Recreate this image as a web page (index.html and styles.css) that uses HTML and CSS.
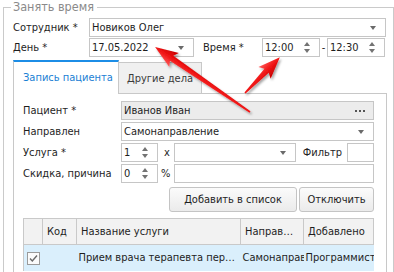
FILE: index.html
```html
<!DOCTYPE html>
<html lang="ru">

<head>
    <meta charset="UTF-8">
    <title>Занять время</title>
    <link rel="stylesheet" href="styles.css">
</head>

<body>

    <fieldset class="group">
        <legend class="group-title">Занять время</legend>

        <div class="row">
            <label class="lbl">Сотрудник *</label>
            <div class="field employee">
                <span class="val">Новиков Олег</span>
                <span class="drop"></span>
            </div>
        </div>

        <div class="row">
            <label class="lbl">День *</label>
            <div class="field date">
                <span class="val">17.05.2022</span>
                <span class="drop"></span>
            </div>
            <label class="lbl time-lbl">Время *</label>
            <div class="field time">
                <span class="val">12:00</span>
                <span class="spinner"><i class="up"></i><i class="down"></i></span>
            </div>
            <span class="dash">-</span>
            <div class="field time">
                <span class="val">12:30</span>
                <span class="spinner"><i class="up"></i><i class="down"></i></span>
            </div>
        </div>

        <div class="tabs">
            <div class="tab active">Запись пациента</div>
            <div class="tab">Другие дела</div>
        </div>

        <div class="panel">
            <div class="prow">
                <span class="plbl">Пациент *</span>
                <div class="field readonly grow">
                    <span class="val">Иванов Иван</span>
                    <span class="dots"><i></i><i></i><i></i></span>
                </div>
            </div>
            <div class="prow">
                <span class="plbl">Направлен</span>
                <div class="field grow">
                    <span class="val">Самонаправление</span>
                    <span class="drop"></span>
                </div>
            </div>
            <div class="prow">
                <span class="plbl">Услуга *</span>
                <div class="field num">
                    <span class="val">1</span>
                    <span class="spinner"><i class="up"></i><i class="down"></i></span>
                </div>
                <span class="sign">x</span>
                <div class="field grow">
                    <span class="drop"></span>
                </div>
                <span class="filter-lbl">Фильтр</span>
                <div class="field filter"></div>
            </div>
            <div class="prow">
                <span class="plbl">Скидка, причина</span>
                <div class="field num">
                    <span class="val">0</span>
                    <span class="spinner"><i class="up"></i><i class="down"></i></span>
                </div>
                <span class="sign pct">%</span>
                <div class="field grow"></div>
            </div>

            <div class="buttons">
                <button class="btn add">Добавить в список</button>
                <button class="btn off">Отключить</button>
            </div>

            <table class="grid">
                <colgroup>
                    <col class="c-chk">
                    <col class="c-code">
                    <col class="c-name">
                    <col class="c-dir">
                    <col class="c-add">
                </colgroup>
                <thead>
                    <tr>
                        <th></th>
                        <th>Код</th>
                        <th>Название услуги</th>
                        <th>Направление</th>
                        <th>Добавлено</th>
                    </tr>
                </thead>
                <tbody>
                    <tr class="selected">
                        <td class="chk-cell">
                            <svg class="chk" width="13" height="13" viewBox="0 0 13 13">
                                <rect x="0.5" y="0.5" width="12" height="12" fill="#fbfbfb" stroke="#9a9a9a"/>
                                <path d="M3 6.5 L5.3 9 L10 3.5" fill="none" stroke="#6a6a6a" stroke-width="1.4"/>
                            </svg>
                        </td>
                        <td></td>
                        <td class="ell">Прием врача терапевта первичный</td>
                        <td class="clip">Самонаправление</td>
                        <td class="clip">Программист</td>
                    </tr>
                </tbody>
            </table>
        </div>
    </fieldset>

    <!-- red pointers drawn over the form -->
    <svg class="arrows" width="394" height="272" viewBox="0 0 394 272">
        <defs>
            <linearGradient id="red" x1="0" y1="0" x2="0" y2="1">
                <stop offset="0" stop-color="#ff5a5a"/>
                <stop offset="0.5" stop-color="#f01414"/>
                <stop offset="1" stop-color="#c40000"/>
            </linearGradient>
            <filter id="shadow" x="-20%" y="-20%" width="140%" height="140%">
                <feDropShadow dx="1.5" dy="2" stdDeviation="1.3" flood-color="#000" flood-opacity="0.35"/>
            </filter>
        </defs>
        <g filter="url(#shadow)">
            <polygon transform="translate(250 112) rotate(-145.6)" fill="url(#red)"
                points="0,-0.8 95,-3 92,-8.5 115,0 92,8.5 95,3 0,0.8"/>
            <polygon transform="translate(245 93) rotate(-45.8)" fill="url(#red)"
                points="0,-0.8 31,-3 28,-8.5 50,0 28,8.5 31,3 0,0.8"/>
        </g>
    </svg>

</body>

</html>
```

FILE: styles.css
```css
* {
    box-sizing: border-box;
}

body {
    margin: 0;
    background-color: #fff;
    font-family: "DejaVu Sans Condensed", "DejaVu Sans", sans-serif;
    font-size: 11px;
    color: #1e1e1e;
    overflow: hidden;
}

.group {
    margin: 0 0 0 3px;
    width: 390px;
    min-height: 300px;
    border: 1px solid #cacaca;
    padding: 4px 6px 0 9px;
}

.group-title {
    margin-left: -2px;
    padding: 0 3px 0 2px;
    font-size: 12.5px;
    line-height: 14px;
    color: #8a8a8a;
}

.row {
    display: flex;
    align-items: center;
    height: 19px;
}

.row + .row {
    margin-top: 1px;
}

.lbl {
    width: 76px;
    flex-shrink: 0;
}

.time-lbl {
    width: 59px;
    margin-left: 9px;
}

.field {
    display: flex;
    align-items: center;
    height: 19px;
    border: 1px solid #c6c6c6;
    background-color: #fff;
    padding-left: 2px;
    white-space: nowrap;
    overflow: hidden;
}

.employee {
    flex: 1;
    margin-right: 1px;
}

.date {
    width: 105px;
}

.time {
    width: 58px;
}

.dash {
    width: 7px;
    text-align: center;
}

.drop {
    margin-left: auto;
    margin-right: 9px;
    width: 0;
    height: 0;
    border-left: 3.5px solid transparent;
    border-right: 3.5px solid transparent;
    border-top: 4px solid #6a6a6a;
}

.spinner {
    margin-left: auto;
    margin-right: 9px;
    display: flex;
    flex-direction: column;
    gap: 3px;
}

.spinner i {
    display: block;
    width: 0;
    height: 0;
    border-left: 3.5px solid transparent;
    border-right: 3.5px solid transparent;
}

.spinner .up {
    border-bottom: 4px solid #737373;
}

.spinner .down {
    border-top: 4px solid #737373;
}

/* tabs */

.tabs {
    display: flex;
    align-items: flex-end;
    margin-top: 3px;
    height: 33px;
}

.tab {
    height: 31px;
    width: 83px;
    padding-left: 8px;
    display: flex;
    align-items: center;
    white-space: nowrap;
    background-color: #f0f0f0;
    border-top: 1px solid #c8c8c8;
    border-right: 1px solid #c8c8c8;
    color: #3a3a3a;
}

.tab.active {
    position: relative;
    z-index: 1;
    height: 34px;
    width: 106px;
    margin-bottom: -1px;
    padding-left: 9px;
    padding-bottom: 1px;
    background-color: #fff;
    border-top: 2px solid #1c8de6;
    border-left: 1px solid #c8c8c8;
    color: #1a80d4;
}

.panel {
    border: 1px solid #c8c8c8;
    padding: 7px 12px 0 9px;
    min-height: 200px;
}

.prow {
    display: flex;
    align-items: center;
    height: 19px;
    margin-bottom: 2px;
}

.plbl {
    width: 98px;
    flex-shrink: 0;
    white-space: nowrap;
}

.grow {
    flex: 1;
}

.readonly {
    background-color: #ececec;
}

.dots {
    margin-left: auto;
    margin-right: 8px;
    display: flex;
    gap: 2px;
}

.dots i {
    display: block;
    width: 2px;
    height: 2px;
    background-color: #555;
}

.num {
    width: 37px;
}

.sign {
    width: 16px;
    padding-left: 6px;
}

.pct {
    padding-left: 3px;
}

.filter-lbl {
    margin: 0 5px 0 7px;
}

.filter {
    width: 27px;
}

.buttons {
    display: flex;
    justify-content: flex-end;
    gap: 2px;
    margin-top: 4px;
}

.btn {
    height: 25px;
    border: 1px solid #c4c4c4;
    border-radius: 3px;
    background: linear-gradient(#fbfbfb, #ebebeb);
    font-family: inherit;
    font-size: 11px;
    color: #1e1e1e;
    padding: 0;
}

.btn.add {
    width: 128px;
}

.btn.off {
    width: 75px;
}

/* grid */

.grid {
    margin-top: 6px;
    width: 350px;
    table-layout: fixed;
    border-collapse: collapse;
}

.c-chk {
    width: 19px;
}

.c-code {
    width: 34px;
}

.c-name {
    width: 164px;
}

.c-dir {
    width: 63px;
}

.c-add {
    width: 70px;
}

.grid th {
    height: 26px;
    padding: 0 4px;
    font-weight: normal;
    text-align: left;
    background-color: #f2f2f2;
    border: 1px solid #c9c9c9;
    white-space: nowrap;
    overflow: hidden;
    text-overflow: ellipsis;
}

.grid td {
    height: 26px;
    padding: 0 2px;
    white-space: nowrap;
    overflow: hidden;
}

.grid tr.selected td {
    background-color: #daeffc;
}

.grid td:first-child {
    border-left: 1px solid #c9c9c9;
}

.chk-cell {
    text-align: center;
}

.chk {
    display: block;
    margin: 1px 0 0 1px;
}

.ell {
    text-overflow: ellipsis;
}

.clip {
    text-overflow: clip;
}

.arrows {
    position: absolute;
    top: 0;
    left: 0;
    pointer-events: none;
}
```
